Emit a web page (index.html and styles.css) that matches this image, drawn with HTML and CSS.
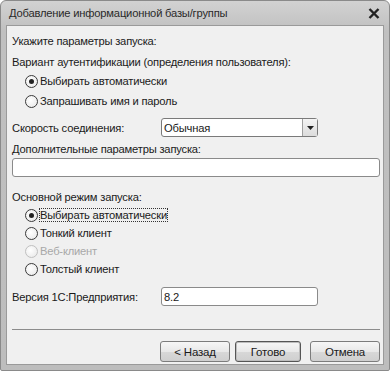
FILE: index.html
```html
<!DOCTYPE html>
<html lang="ru">
<head>
<meta charset="utf-8">
<link rel="stylesheet" href="styles.css">
</head>
<body>
<div class="window">
  <div class="titlebar">
    <span class="title">Добавление информационной базы/группы</span>
    <svg class="close" width="12" height="11" viewBox="0 0 12 11"><path d="M1.5 1 L10.5 10 M10.5 1 L1.5 10" stroke="#222" stroke-width="2.4" stroke-linecap="butt"/></svg>
  </div>
  <div class="client">
    <div class="label first">Укажите параметры запуска:</div>
    <div class="label">Вариант аутентификации (определения пользователя):</div>
    <div class="radios">
      <div class="radio"><span class="circle checked"></span><span>Выбирать автоматически</span></div>
      <div class="radio"><span class="circle"></span><span>Запрашивать имя и пароль</span></div>
    </div>
    <div class="row speed">
      <span class="rowlabel">Скорость соединения:</span>
      <div class="combo"><span class="combotext">Обычная</span><span class="dropbtn"><svg width="7" height="4" viewBox="0 0 7 4"><path d="M0 0 H7 L3.5 4 Z" fill="#222"/></svg></span></div>
    </div>
    <div class="label addl">Дополнительные параметры запуска:</div>
    <div class="input wide"></div>
    <div class="label mode">Основной режим запуска:</div>
    <div class="radios mode-radios">
      <div class="radio"><span class="circle checked"></span><span class="focus">Выбирать автоматически</span></div>
      <div class="radio"><span class="circle"></span><span>Тонкий клиент</span></div>
      <div class="radio disabled"><span class="circle"></span><span>Веб-клиент</span></div>
      <div class="radio"><span class="circle"></span><span>Толстый клиент</span></div>
    </div>
    <div class="row version">
      <span class="rowlabel">Версия 1С:Предприятия:</span>
      <div class="input short">8.2</div>
    </div>
    <div class="separator"></div>
    <div class="buttons">
      <button class="btn back">&lt; Назад</button>
      <button class="btn default">Готово</button>
      <button class="btn cancel">Отмена</button>
    </div>
  </div>
</div>
</body>
</html>
```
FILE: styles.css
```css
html, body {
  margin: 0;
  padding: 0;
  background: #ffffff;
}
body {
  font-family: "Liberation Sans", Arial, sans-serif;
  font-size: 11.2px;
  letter-spacing: -0.2px;
  color: #1a1a1a;
}
.window {
  width: 390px;
  height: 371px;
  box-sizing: border-box;
  background: linear-gradient(#d2d2d2, #c0c0c0 30px, #bdbdbd);
  border: 1px solid #8a8a8a;
  border-radius: 6px 6px 2px 2px;
  padding: 0 5px 5px 5px;
  display: flex;
  flex-direction: column;
}
.titlebar {
  height: 24px;
  display: flex;
  align-items: center;
  justify-content: space-between;
  padding: 0 3px 0 3px;
}
.title {
  color: #2a2a2a;
}
.close {
  margin-right: 1px;
}
.client {
  flex: 1;
  background: #f0f0f0;
  border: 1px solid #9a9a9a;
  padding: 0 1px 0 5px;
  display: flex;
  flex-direction: column;
}
.label {
  line-height: 16px;
}
.first { margin-top: 7px; }
.label + .label { margin-top: 5px; }
.radios {
  display: flex;
  flex-direction: column;
  padding-left: 13px;
  margin-top: 1px;
}
.radio {
  display: flex;
  align-items: center;
  height: 20px;
}
.circle {
  width: 13px;
  height: 13px;
  border: 1px solid #3a3a3a;
  border-radius: 50%;
  background: radial-gradient(circle at 40% 40%, #ffffff, #e6e6e6);
  box-sizing: border-box;
  margin-right: 2px;
  position: relative;
  flex: none;
}
.circle.checked::after {
  content: "";
  position: absolute;
  left: 3px;
  top: 3px;
  width: 5px;
  height: 5px;
  border-radius: 50%;
  background: #222;
}
.radio.disabled { color: #a8a8a8; }
.radio.disabled .circle { border-color: #c0c0c0; }
.focus {
  outline: 1px dotted #333;
  outline-offset: 0;
}
.row {
  display: flex;
  align-items: center;
}
.rowlabel {
  width: 149px;
}
.speed { margin-top: 7px; }
.combo {
  width: 157px;
  height: 19px;
  box-sizing: border-box;
  border: 1px solid #7a7a7a;
  border-radius: 3px;
  background: #fff;
  display: flex;
  align-items: center;
  justify-content: space-between;
  padding-left: 2px;
}
.dropbtn {
  width: 14px;
  height: 17px;
  border-left: 1px solid #a0a0a0;
  background: linear-gradient(#f4f4f4, #dcdcdc);
  display: flex;
  align-items: center;
  justify-content: center;
}
.addl { margin-top: 4px; }
.input {
  background: #fff;
  border: 1px solid #8a8a8a;
  border-radius: 3px;
  box-sizing: border-box;
  height: 19px;
  padding-left: 2px;
  display: flex;
  align-items: center;
}
.wide { margin-top: 1px; width: 368px; }
.mode { margin-top: 12px; }
.mode-radios { margin-top: 1px; }
.mode-radios .radio { height: 18px; }
.version { margin-top: 9px; }
.short { width: 157px; }
.separator {
  margin-top: 23px;
  height: 1px;
  background: #8c8c8c;
  margin-right: 2px;
}
.buttons {
  display: flex;
  justify-content: flex-end;
  gap: 5px;
  margin-top: 11px;
  padding-right: 2px;
}
.btn {
  font-family: inherit;
  font-size: 11.5px;
  letter-spacing: -0.2px;
  color: #1a1a1a;
  height: 21px;
  border: 1px solid #7c7c7c;
  border-radius: 3px;
  background: linear-gradient(#f6f6f6, #e8e8e8 50%, #d8d8d8 51%, #cfcfcf);
  padding: 0;
}
.back { width: 70px; }
.default { width: 66px; border-color: #555; box-shadow: inset 0 0 0 1px #bdbdbd; }
.cancel { width: 70px; margin-left: 4px; }
```
